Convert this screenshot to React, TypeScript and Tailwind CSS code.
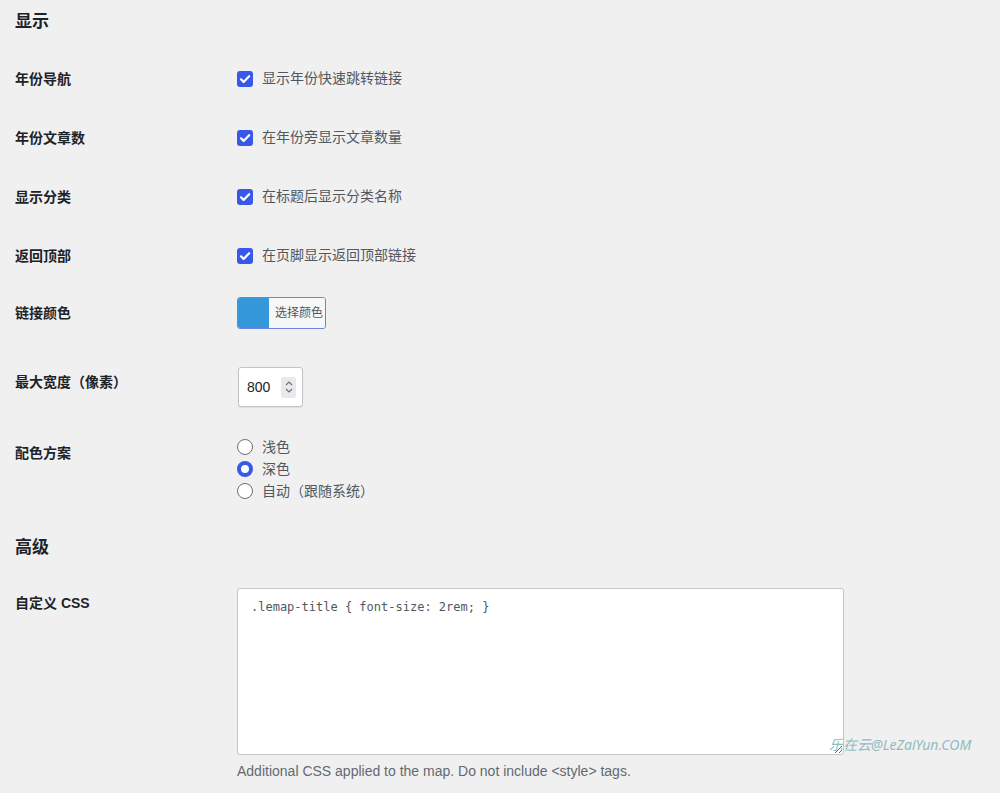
import React from "react";

const font = {
	fontFamily: '"Liberation Sans", "Noto Sans CJK SC", sans-serif',
};

function Checkbox() {
	return (
		<span className="flex h-4 w-4 items-center justify-center rounded-[3px] bg-[#3858e9]">
			<svg viewBox="0 0 16 16" className="h-4 w-4" fill="none">
				<path
					d="M4 8.3l2.6 2.6L12.2 5.2"
					stroke="#fff"
					strokeWidth={2.2}
					strokeLinecap="round"
					strokeLinejoin="round"
				/>
			</svg>
		</span>
	);
}

function Radio({ checked }: { checked?: boolean }) {
	return checked ? (
		<span className="block h-4 w-4 rounded-full border-[4px] border-[#3858e9] bg-white" />
	) : (
		<span className="block h-4 w-4 rounded-full border border-[#6c7075] bg-white" />
	);
}

function Label({ children, pt = "" }: { children: React.ReactNode; pt?: string }) {
	return (
		<div className={`w-[222px] shrink-0 text-[14px] leading-[18px] font-semibold text-[#1d2327] ${pt}`}>
			{children}
		</div>
	);
}

const checks = [
	["年份导航", "显示年份快速跳转链接"],
	["年份文章数", "在年份旁显示文章数量"],
	["显示分类", "在标题后显示分类名称"],
	["返回顶部", "在页脚显示返回顶部链接"],
];

export default function App() {
	return (
		<div className="relative min-h-[793px] bg-[#f0f0f1] px-[15px]" style={font}>
			<div className="flex h-[44px] items-center text-[17px] font-semibold text-[#1d2327]">
				显示
			</div>
			<div className="h-[5px]" />

			{checks.map(([label, text]) => (
				<div key={label} className="flex h-[59px] items-center">
					<Label>{label}</Label>
					<div className="flex items-center gap-[9px] text-[14px] text-[#50575e]">
						<Checkbox />
						<span>{text}</span>
					</div>
				</div>
			))}

			{/* link colour */}
			<div className="flex h-[56px] items-center">
				<Label>链接颜色</Label>
				<div className="flex h-[32px] w-[89px] overflow-hidden rounded-[3px] border border-[#6b80e8]">
					<span className="w-[31px] bg-[#3498db]" />
					<span className="flex flex-1 items-center bg-[#f6f7f7] pl-[6px] text-[12px] text-[#50575e]">
						选择颜色
					</span>
				</div>
			</div>

			{/* max width */}
			<div className="flex h-[84px] items-start">
				<Label pt="pt-[32px]">最大宽度（像素）</Label>
				<div className="pt-[26px]">
					<div className="ml-px flex h-[40px] w-[65px] items-center rounded-[3px] border border-[#c3c4c7] bg-white pl-[8px] shadow-[0_1px_1px_rgba(0,0,0,0.08)]">
						<span className="text-[14px] text-[#1d2327]">800</span>
						<span className="ml-auto mr-[6px] flex h-[21px] w-[15px] flex-col items-center justify-center rounded-[2px] bg-[#e9e9ed]">
							<svg viewBox="0 0 10 14" className="h-[14px] w-[10px]" fill="none">
								<path d="M2 5l3-3 3 3M2 9l3 3 3-3" stroke="#6b6b73" strokeWidth={1.1} />
							</svg>
						</span>
					</div>
				</div>
			</div>

			{/* colour scheme */}
			<div className="flex h-[87px] items-start">
				<Label pt="pt-[19px]">配色方案</Label>
				<div className="flex flex-col pt-[11px] text-[14px] text-[#50575e]">
					{[
						["浅色", false],
						["深色", true],
						["自动（跟随系统）", false],
					].map(([t, c]) => (
						<div key={t as string} className="flex h-[22px] items-center gap-[9px]">
							<Radio checked={c as boolean} />
							<span>{t as string}</span>
						</div>
					))}
				</div>
			</div>

			<div className="flex h-[72px] items-center text-[17px] font-semibold text-[#1d2327]">
				高级
			</div>

			{/* custom css */}
			<div className="flex items-start">
				<Label pt="pt-[10px]">自定义 CSS</Label>
				<div className="pt-[4px]">
					<textarea
						readOnly
						defaultValue=".lemap-title { font-size: 2rem; }"
						className="block h-[167px] w-[607px] rounded-[3px] border border-[#c5c6c9] bg-white px-[13px] py-[9px] text-[12px] text-[#50575e] outline-none"
						style={{ fontFamily: '"DejaVu Sans Mono", monospace' }}
					/>
					<p className="mt-[6px] text-[14px] leading-[20px] text-[#646970]">
						Additional CSS applied to the map. Do not include &lt;style&gt; tags.
					</p>
				</div>
			</div>

			<span
				className="absolute left-[829px] top-[734px] text-[14px] italic text-[#8fbcc0]"
				style={{ fontFamily: '"Noto Sans", "Noto Sans CJK SC", sans-serif' }}
			>
				乐在云@LeZaiYun.COM
			</span>
		</div>
	);
}
